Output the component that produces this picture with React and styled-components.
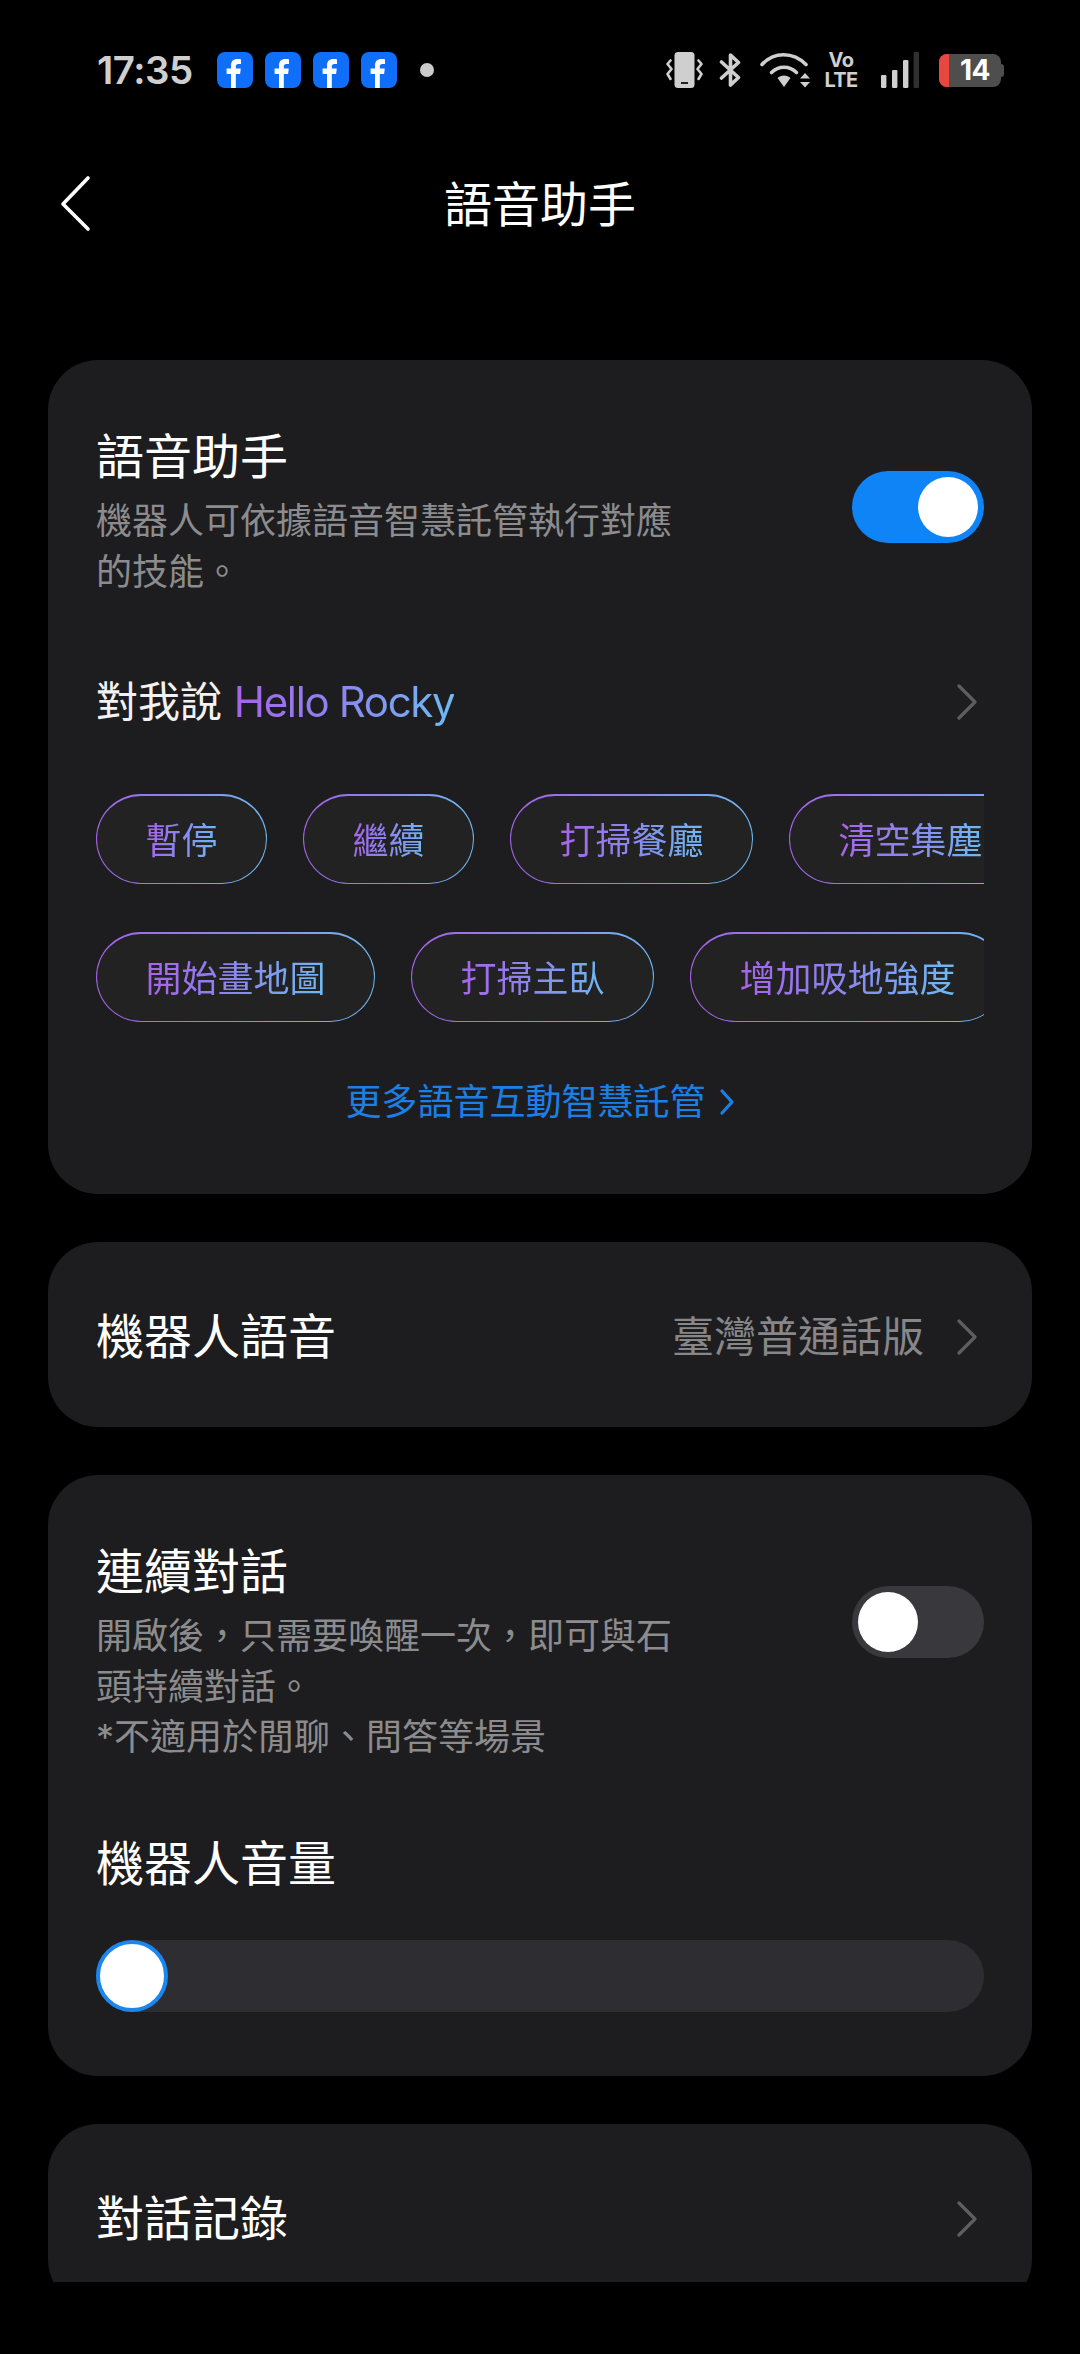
import React from "react";
import styled, { createGlobalStyle } from "styled-components";

const Global = createGlobalStyle`
  html, body { margin: 0; padding: 0; background: #000; }
  body { font-family: "Inter", "Noto Sans CJK TC", sans-serif; }
  * { box-sizing: border-box; }
`;
const CJK = `"Inter", "Noto Sans CJK TC", sans-serif`;
const GRAD = `linear-gradient(95deg, #a862ea 0%, #8a88ee 50%, #6dbcf2 100%)`;

const Page = styled.div`
  width: 1080px; height: 2354px; background: #000; overflow: hidden;
  display: flex; flex-direction: column; font-family: ${CJK};
`;
const StatusBar = styled.div`
  height: 140px; flex: none; display: flex; align-items: flex-start;
  padding: 52px 76px 0 97px;
`;
const Clock = styled.span`
  font-family: "Inter", sans-serif; font-size: 38.5px; font-weight: 600; line-height: 36px;
  color: #cfcfcf; letter-spacing: -0.5px; width: 120px; flex: none;
`;
const FbRow = styled.div`display: flex; gap: 12px;`;
const Dot = styled.span`
  width: 14px; height: 14px; border-radius: 50%; background: #cbcbcb;
  margin: 11px 0 0 23px;
`;
const StatusRight = styled.div`
  margin-left: auto; display: flex; align-items: flex-start;
`;
const Vo = styled.div`
  width: 36px; margin: -2px 22px 0 13px; color: #cfcfcf; font-family: "Inter", sans-serif;
  font-weight: 700; font-size: 20px; line-height: 20px; text-align: center;
  letter-spacing: -0.6px;
`;
const Battery = styled.div`
  display: flex; align-items: stretch; margin: 2px 0 0 20px;
`;
const BatteryBody = styled.div`
  width: 62px; height: 33px; border-radius: 8px; background: #4e4e4e; display: flex;
`;
const BatteryFill = styled.div`width: 10px; background: #e8473f; flex: none; border-radius: 8px 0 0 8px;`;
const BatteryText = styled.span`
  flex: 1; text-align: center; color: #fff; font-family: "Inter", sans-serif;
  font-weight: 700; font-size: 28px; line-height: 33px; letter-spacing: -0.5px;
`;
const BatteryTip = styled.div`
  width: 3px; height: 13px; margin-top: 10px; background: #4e4e4e; border-radius: 0 3px 3px 0;
`;

const Nav = styled.header`
  height: 130px; flex: none; display: flex; align-items: center; justify-content: center;
  position: relative; margin-bottom: 90px;
`;
const BackButton = styled.button`
  position: absolute; left: 60px; top: 34px; background: none; border: 0; padding: 0;
  width: 32px; height: 60px; display: flex;
`;
const NavTitle = styled.h1`
  margin: 0; font-size: 48px; font-weight: 400; line-height: 60px; color: #fff;
`;
const Scroll = styled.main`
  height: 1922px; flex: none; overflow: hidden; padding: 0 48px;
  display: flex; flex-direction: column; gap: 48px;
`;
const Card = styled.section`
  background: #1d1d1f; border-radius: 50px; flex: none; padding: ${p => p.$pad || "67px 48px 64px"};
`;
const HeaderRow = styled.div`display: flex; justify-content: space-between; align-items: flex-start;`;
const HeaderText = styled.div`width: 580px;`;
const Title = styled.h2`
  margin: 0; font-size: 48px; font-weight: 400; line-height: 60px; color: #fff;
`;
const Desc = styled.p`
  margin: 9px 0 0; font-size: 36px; line-height: 50.5px; color: #8c8c8e; font-weight: 400;
`;
const Toggle = styled.div`
  width: 132px; height: 72px; margin-top: 44px; border-radius: 36px; flex: none;
  background: ${p => (p.$on ? "#0f84f7" : "#39393d")};
  display: flex; align-items: center; padding: 0 6px;
  justify-content: ${p => (p.$on ? "flex-end" : "flex-start")};
`;
const Knob = styled.span`width: 60px; height: 60px; border-radius: 50%; background: #fff;`;
const WakeRow = styled.div`
  margin-top: 75px; height: 60px; display: flex; align-items: center; justify-content: space-between;
`;
const WakeText = styled.div`
  font-size: 42px; line-height: 60px; color: #f2f2f2;
`;
const GradText = styled.span`
  background: ${GRAD}; -webkit-background-clip: text; background-clip: text; color: transparent;
`;
const RockyText = styled(GradText)`letter-spacing: -1.35px;`;
const Chevron = styled.svg`
  width: 22px; height: 36px; flex: none; margin-right: 6px; display: block;
`;
const Pills = styled.div`
  display: flex; flex-direction: column; gap: 48px; margin-top: 62px;
`;
const PillRow = styled.div`display: flex; gap: 36px; overflow: hidden;`;
const Pill = styled.div`
  flex: none; height: 90px; padding: 3px 48.5px 0; border-radius: 45px;
  border-style: solid; border-color: transparent; border-width: 2px 1px 1px 1px;
  background: linear-gradient(#222223, #222223) padding-box, ${GRAD} border-box;
  display: flex; align-items: center; font-size: 36px; line-height: 50px;
`;
const MoreLink = styled.a`
  margin-top: 55px; display: flex; align-items: center; justify-content: center; gap: 13px;
  font-size: 36px; line-height: 50px; color: #1a80e6;
`;
const NavRow = styled.div`
  height: 185px; padding: 4px 48px 0; display: flex; align-items: center; justify-content: space-between;
`;
const Side = styled.div`display: flex; align-items: center; gap: 32px;`;
const SideValue = styled.span`font-size: 42px; color: #87878a; line-height: 60px;`;
const VolumeTitle = styled(Title)`margin-top: 71.5px;`;
const Track = styled.div`
  margin-top: 46px; height: 72px; border-radius: 36px; background: #2e2e32; display: flex;
`;
const Thumb = styled.div`
  width: 72px; height: 72px; border-radius: 50%; background: #fff; border: 4.5px solid #1a87f0;
`;

const Fb = () => (
  <svg width="36" height="36" viewBox="0 0 36 36">
    <rect width="36" height="36" rx="8" fill="#0f6ffb" />
    <path fill="#fff" d="M14 36V22H9.6v-5.4H14v-3.2C14 9.2 16.4 7 20.3 7c1.7 0 3.2.1 3.7.2V12h-2.6c-2 0-2.6 1-2.6 2.4v2.2h5l-.7 5.4h-4.3v14z" />
  </svg>
);
const Vibrate = () => (
  <svg width="37" height="36" viewBox="0 0 37 36" style={{ display: "block" }}>
    <rect x="8.5" y="0" width="20" height="36" rx="3.5" fill="#cfcfcf" />
    <rect x="15" y="30" width="7" height="2" fill="#222" />
    <path d="M4.5 8.5L1.5 12l4 5-4 5 3 5M32.5 8.5l3 3.5-4 5 4 5-3 5" fill="none" stroke="#cfcfcf" strokeWidth="2.6" strokeLinecap="round" strokeLinejoin="round" />
  </svg>
);
const Bluetooth = () => (
  <svg width="24" height="36" viewBox="0 0 24 36" style={{ display: "block", marginLeft: 16 }}>
    <path d="M2.5 10 L19.5 25.5 L11.5 33 V3 L19.5 10.5 L2.5 26" fill="none" stroke="#cfcfcf" strokeWidth="3.6" strokeLinecap="round" strokeLinejoin="round" />
  </svg>
);
const Wifi = () => (
  <svg width="50" height="36" viewBox="0 0 50 36" style={{ display: "block", marginLeft: 17 }}>
    <g fill="none" stroke="#cfcfcf" strokeWidth="3.6" strokeLinecap="round">
      <path d="M2 12.5C14 -0.5 33 -0.5 46 12.5" />
      <path d="M11.5 20.5C18.5 13.5 29.5 13.5 36.5 20.5" />
    </g>
    <path fill="#cfcfcf" d="M17.5 26c3.5-3.4 9.5-3.4 13 0L24 35z" />
    <path fill="#cfcfcf" d="M40 26.5L45 21l5 5.5zM40 30h10l-5 5.5z" />
  </svg>
);
const Signal = () => (
  <svg width="38" height="36" viewBox="0 0 38 36" style={{ display: "block" }}>
    <rect x="0" y="23" width="5.4" height="13" rx="1.2" fill="#cfcfcf" />
    <rect x="11" y="18" width="5.4" height="18" rx="1.2" fill="#cfcfcf" />
    <rect x="22" y="8" width="5.4" height="28" rx="1.2" fill="#cfcfcf" />
    <rect x="32.6" y="0" width="5.4" height="36" rx="1.2" fill="#303030" />
  </svg>
);
const ChevronIcon = ({ color = "#5e5e60" }) => (
  <Chevron viewBox="0 0 22 36">
    <path d="M3 2 L19 18 L3 34" fill="none" stroke={color} strokeWidth="3.2" strokeLinecap="round" strokeLinejoin="round" />
  </Chevron>
);

export default function App() {
  const row1 = ["暫停", "繼續", "打掃餐廳", "清空集塵"];
  const row2 = ["開始畫地圖", "打掃主臥", "增加吸地強度"];
  const renderPills = (items) => items.map((t) => (
    <Pill key={t}><GradText>{t}</GradText></Pill>
  ));
  return (
    <Page>
      <Global />
      <StatusBar>
        <Clock>17:35</Clock>
        <FbRow><Fb /><Fb /><Fb /><Fb /></FbRow>
        <Dot />
        <StatusRight>
          <Vibrate />
          <Bluetooth />
          <Wifi />
          <Vo>Vo<br />LTE</Vo>
          <Signal />
          <Battery>
            <BatteryBody>
              <BatteryFill />
              <BatteryText>14</BatteryText>
            </BatteryBody>
            <BatteryTip />
          </Battery>
        </StatusRight>
      </StatusBar>
      <Nav>
        <BackButton aria-label="返回">
          <svg width="32" height="60" viewBox="0 0 32 60">
            <path d="M28 4 L3 30 L28 55" fill="none" stroke="#fff" strokeWidth="3.6" strokeLinecap="round" strokeLinejoin="round" />
          </svg>
        </BackButton>
        <NavTitle>語音助手</NavTitle>
      </Nav>
      <Scroll>
        <Card $pad="67px 48px 67px">
          <HeaderRow>
            <HeaderText>
              <Title>語音助手</Title>
              <Desc>機器人可依據語音智慧託管執行對應的技能。</Desc>
            </HeaderText>
            <Toggle $on><Knob /></Toggle>
          </HeaderRow>
          <WakeRow>
            <WakeText>對我說 <RockyText>Hello Rocky</RockyText></WakeText>
            <ChevronIcon />
          </WakeRow>
          <Pills>
            <PillRow>{renderPills(row1)}</PillRow>
            <PillRow>{renderPills(row2)}</PillRow>
          </Pills>
          <MoreLink>
            更多語音互動智慧託管
            <svg width="16" height="28" viewBox="0 0 16 28">
              <path d="M3 3 L13 14 L3 25" fill="none" stroke="#1a80e6" strokeWidth="3.2" strokeLinecap="round" strokeLinejoin="round" />
            </svg>
          </MoreLink>
        </Card>
        <Card $pad="0">
          <NavRow>
            <Title>機器人語音</Title>
            <Side>
              <SideValue>臺灣普通話版</SideValue>
              <ChevronIcon />
            </Side>
          </NavRow>
        </Card>
        <Card>
          <HeaderRow>
            <HeaderText>
              <Title>連續對話</Title>
              <Desc>開啟後，只需要喚醒一次，即可與石頭持續對話。<br />*不適用於閒聊、問答等場景</Desc>
            </HeaderText>
            <Toggle><Knob /></Toggle>
          </HeaderRow>
          <VolumeTitle>機器人音量</VolumeTitle>
          <Track><Thumb /></Track>
        </Card>
        <Card $pad="0">
          <NavRow>
            <Title>對話記錄</Title>
            <ChevronIcon />
          </NavRow>
        </Card>
      </Scroll>
    </Page>
  );
}
